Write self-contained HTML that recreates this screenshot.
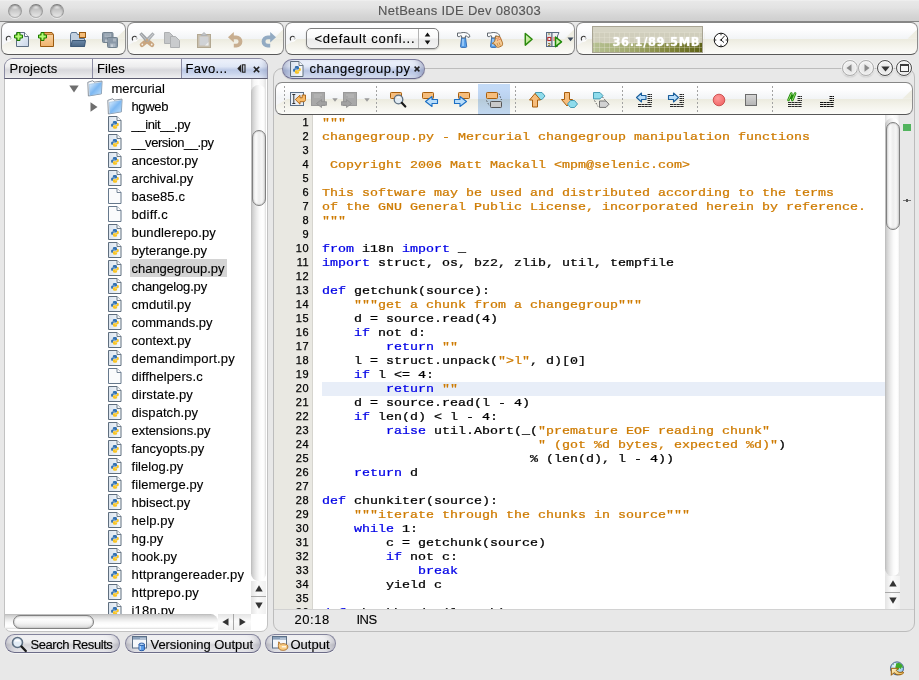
<!DOCTYPE html>
<html><head><meta charset="utf-8"><title>NetBeans IDE Dev 080303</title>
<style>
html,body{margin:0;padding:0}
body{width:919px;height:680px;overflow:hidden;background:#e8e8e8;position:relative;font-family:"Liberation Sans",sans-serif;font-size:13px;color:#000;-webkit-text-stroke:.12px}
.a{position:absolute}
.ic{position:absolute;overflow:visible}
.t{position:absolute;white-space:pre;line-height:16px;height:16px}
#title{left:0;top:0;width:919px;height:21px;background:linear-gradient(#f2f2f2 0,#e8e8e8 6%,#e3e3e3 35%,#d5d5d5 75%,#cfcfcf 100%)}
#tline{left:0;top:21px;width:919px;height:1px;background:#868686}
.tl{position:absolute;top:4px;width:14px;height:14px;border-radius:50%;box-sizing:border-box;border:1px solid #9a9a9a;border-top-color:#7c7c7c;border-bottom-color:#b0b0b0;background:radial-gradient(ellipse 40% 22% at 50% 16%,rgba(255,255,255,.75) 0,rgba(255,255,255,0) 100%),linear-gradient(#b2b2b2 0,#c6c6c6 40%,#dadada 75%,#e6e6e6 100%);box-shadow:0 1px 0 rgba(255,255,255,.55),inset 0 1px 2px rgba(0,0,0,.25)}
.tb{position:absolute;box-sizing:border-box;border:1px solid #8e8e8e;border-top-color:#868686;border-bottom-color:#585858;border-radius:7px;background:linear-gradient(#fff 0,#fdfdfe 22%,#f2f4f6 51%,#ecebdf 52%,#f3f2ea 70%,#fcfcf9 100%);overflow:hidden}
.tb .dg{position:absolute;right:0;top:0;width:22px;height:100%;}
.hd{position:absolute;width:6px;height:6px;border-radius:50%;box-sizing:border-box;border:1.300px solid #333;border-right-color:#f4f4f4;border-bottom-color:#fff;transform:rotate(0deg)}
.sep{position:absolute;width:1px;height:26px;top:86px;background:repeating-linear-gradient(#a2a2a2 0,#a2a2a2 2px,transparent 2px,transparent 4px)}

#side{left:4px;top:58px;width:264px;height:574px;box-sizing:border-box;border:1px solid #c2c2c2;border-radius:9px 9px 7px 7px;background:#fff;overflow:hidden}
#tabs{left:4px;top:58px;width:264px;height:21px;box-sizing:border-box;border:1px solid #8a8aa2;border-bottom:1px solid #5c5c70;border-radius:9px 9px 0 0;overflow:hidden}
.tab{position:absolute;top:0;height:19px;background:linear-gradient(#fafafa 0,#ededee 40%,#d8d8dc 58%,#e2e2e5 78%,#f0f0f1 100%);}
.tab.sel{background:linear-gradient(#eff3fc 0,#dfe7f6 40%,#bcc9e6 58%,#cad5ed 78%,#e3e9f7 100%);box-shadow:inset -7px 0 6px -4px rgba(90,100,140,.3)}
.tsep{position:absolute;top:0;width:1px;height:19px;background:#8a8aa2}
#tabline{left:0;top:19px;width:262px;height:1px;background:#70708a}
.row{position:absolute;left:0;height:18px;line-height:18px;white-space:pre;margin-top:1px}
.vsb{position:absolute;width:15px;background:linear-gradient(90deg,#b8b8b8 0,#cbcbcb 8%,#dadada 20%,#ececec 38%,#fbfbfb 58%,#fff 75%,#fcfcfc 88%,#e6e6e6 95%,#dedede 100%)}
.hsb{position:absolute;height:15px;background:linear-gradient(#b8b8b8 0,#cbcbcb 8%,#dadada 20%,#ececec 38%,#fbfbfb 58%,#fff 75%,#fcfcfc 88%,#e6e6e6 95%,#dedede 100%)}
.vth{position:absolute;box-sizing:border-box;border:1.400px solid #808080;box-shadow:inset 0 0 1.500px rgba(0,0,0,.35);border-radius:7.500px;background:linear-gradient(90deg,#e4e4e4 0,#fbfbfb 25%,#ededed 50%,#f6f6f6 75%,#dcdcdc 100%)}
.hth{position:absolute;box-sizing:border-box;border:1.400px solid #808080;box-shadow:inset 0 0 1.500px rgba(0,0,0,.35);border-radius:7.500px;background:linear-gradient(#e9e9e9 0,#fdfdfd 30%,#f4f4f4 60%,#d9d9d9 100%)}
.sbb{position:absolute;background:linear-gradient(90deg,#e4e4e4 0,#fbfbfb 45%,#f0f0f0 100%);box-sizing:border-box}
#edp{left:273px;top:68px;width:642px;height:564px;box-sizing:border-box;border:1px solid #bcbcbc;border-radius:9px;background:#e8e8e8}
#etab{left:282px;top:58.500px;width:143px;height:20.500px;box-sizing:border-box;border:1px solid #7a7a9a;border-bottom-color:#66668a;border-radius:10.250px;background:linear-gradient(#f0f4fc 0,#e2e9f7 35%,#b8c5e3 60%,#c6d1ea 80%,#dfe6f5 100%);box-shadow:inset 7px 0 6px -4px rgba(90,100,140,.4),inset -7px 0 6px -4px rgba(90,100,140,.4),0 1px 1px rgba(0,0,0,.12)}
#etb{left:275px;top:82px;width:638px;height:33px}
#gut{left:274px;top:115px;width:39px;height:494px;background:#e9e8e2;border-right:1px solid #d6d5cf;box-sizing:border-box}
#code{left:313px;top:115px;width:572px;height:494px;background:#fff;overflow:hidden}
.ln{position:absolute;left:274px;width:35px;text-align:right;font-size:11px;line-height:14px;height:14px;letter-spacing:.45px;margin-top:-1px;-webkit-text-stroke:.25px #000}
.cl{position:absolute;left:9px;-webkit-text-stroke:.3px;transform:scaleY(.82);transform-origin:0 10.550px;height:14px;line-height:14px;white-space:pre;font-family:"Liberation Mono",monospace;font-size:13.330px}
.k{color:#0000e6}.s{color:#ce7b00}
.pill{position:absolute;top:634px;height:19px;box-sizing:border-box;border:1px solid #84849c;border-bottom-color:#6c6c88;border-radius:9.500px;background:linear-gradient(#f6f6f8 0,#ececee 42%,#d4d4d8 58%,#e0e0e4 80%,#ececf0 100%);box-shadow:inset 7px 0 6px -4px rgba(90,90,110,.28),inset -7px 0 6px -4px rgba(90,90,110,.28),0 1px 0 rgba(255,255,255,.5)}
.cb{position:absolute;top:59.800px;width:16px;height:16px;border-radius:50%;box-sizing:border-box;border:1px solid #adadad;background:radial-gradient(circle at 50% 55%,#e4e4e4 0,#ececec 45%,#fdfdfd 85%,#f0f0f0 100%);box-shadow:0 0 0 1px rgba(255,255,255,.55),0 1px 1.500px rgba(0,0,0,.28)}
.cb.dk{border-color:#4e4e4e;border-width:1.200px}
</style></head>
<body>
<div id="title" class="a"></div><div id="tline" class="a"></div>
<div class="tl" style="left:8px"></div>
<div class="tl" style="left:29px"></div>
<div class="tl" style="left:50px"></div>
<div class="t" style="left:0;width:919px;text-align:center;top:3px;color:#555;letter-spacing:.3px">NetBeans IDE Dev 080303</div>
<div class="tb" style="left:1px;top:22px;width:125px;height:33px"><svg class="dg" style="width:22px;height:31px" viewBox="0 0 22 31" preserveAspectRatio="none"><path d="M22 6.500L12.500 15.800H22z" fill="#eeede2"/></svg><svg class="dg" style="left:0;right:auto;width:14px;height:31px" viewBox="0 0 14 31" preserveAspectRatio="none"><path d="M0 15.600H12L0 22.500z" fill="#f5f6f8"/></svg></div>
<div class="tb" style="left:127px;top:22px;width:157px;height:33px"><svg class="dg" style="width:22px;height:31px" viewBox="0 0 22 31" preserveAspectRatio="none"><path d="M22 6.500L12.500 15.800H22z" fill="#eeede2"/></svg><svg class="dg" style="left:0;right:auto;width:14px;height:31px" viewBox="0 0 14 31" preserveAspectRatio="none"><path d="M0 15.600H12L0 22.500z" fill="#f5f6f8"/></svg></div>
<div class="tb" style="left:285px;top:22px;width:290px;height:33px"><svg class="dg" style="width:22px;height:31px" viewBox="0 0 22 31" preserveAspectRatio="none"><path d="M22 6.500L12.500 15.800H22z" fill="#eeede2"/></svg><svg class="dg" style="left:0;right:auto;width:14px;height:31px" viewBox="0 0 14 31" preserveAspectRatio="none"><path d="M0 15.600H12L0 22.500z" fill="#f5f6f8"/></svg></div>
<div class="tb" style="left:576px;top:22px;width:342px;height:33px"><svg class="dg" style="width:22px;height:31px" viewBox="0 0 22 31" preserveAspectRatio="none"><path d="M22 6.500L12.500 15.800H22z" fill="#eeede2"/></svg><svg class="dg" style="left:0;right:auto;width:14px;height:31px" viewBox="0 0 14 31" preserveAspectRatio="none"><path d="M0 15.600H12L0 22.500z" fill="#f5f6f8"/></svg></div>
<svg class="ic" style="left:4.5px;top:35px" width="8" height="8" viewBox="0 0 8 8"><circle cx="4" cy="4" r="2.100" fill="none" stroke="#fff" stroke-width="1.100"/><path d="M2 5.400A2.100 2.100 0 1 1 5.400 2" fill="none" stroke="#3a3a3a" stroke-width="1.100"/><path d="M5.400 2A2.100 2.100 0 0 1 5.700 4.500" fill="none" stroke="#9a9a9a" stroke-width=".9"/></svg>
<svg class="ic" style="left:130.5px;top:35px" width="8" height="8" viewBox="0 0 8 8"><circle cx="4" cy="4" r="2.100" fill="none" stroke="#fff" stroke-width="1.100"/><path d="M2 5.400A2.100 2.100 0 1 1 5.400 2" fill="none" stroke="#3a3a3a" stroke-width="1.100"/><path d="M5.400 2A2.100 2.100 0 0 1 5.700 4.500" fill="none" stroke="#9a9a9a" stroke-width=".9"/></svg>
<svg class="ic" style="left:288.5px;top:35px" width="8" height="8" viewBox="0 0 8 8"><circle cx="4" cy="4" r="2.100" fill="none" stroke="#fff" stroke-width="1.100"/><path d="M2 5.400A2.100 2.100 0 1 1 5.400 2" fill="none" stroke="#3a3a3a" stroke-width="1.100"/><path d="M5.400 2A2.100 2.100 0 0 1 5.700 4.500" fill="none" stroke="#9a9a9a" stroke-width=".9"/></svg>
<svg class="ic" style="left:579.5px;top:35px" width="8" height="8" viewBox="0 0 8 8"><circle cx="4" cy="4" r="2.100" fill="none" stroke="#fff" stroke-width="1.100"/><path d="M2 5.400A2.100 2.100 0 1 1 5.400 2" fill="none" stroke="#3a3a3a" stroke-width="1.100"/><path d="M5.400 2A2.100 2.100 0 0 1 5.700 4.500" fill="none" stroke="#9a9a9a" stroke-width=".9"/></svg>
<svg class="ic" style="left:13.5px;top:31.5px" width="16" height="16" viewBox="0 0 16 16" ><defs><linearGradient id="gdocnewfile13_31" x1="0" y1="0" x2="1" y2="1"><stop offset="0" stop-color="#f6f9fd"/><stop offset="1" stop-color="#c8d5e8"/></linearGradient></defs>
<path d="M2.500 0.500h8l4 4v10h-12z" fill="url(#gdocnewfile13_31)" stroke="#5f6f82"/><path d="M10.500 0.500v4h4" fill="#fff" stroke="#5f6f82"/><path d="M3 0.5h3v2.5h2.5v3H6v2.5H3V6H0.5V3H3z" fill="#7fdc3a" stroke="#1c7a00" stroke-width="1"/><path d="M3.8 1.5h1.4v2.3h2.3v1.4H5.2v2.3H3.8V5.2H1.5V3.8h2.3z" fill="#b6f57a"/></svg>
<svg class="ic" style="left:37.5px;top:31.5px" width="16" height="16" viewBox="0 0 16 16" ><defs><linearGradient id="gboxnewproj37_31" x1="0" y1="0" x2="0" y2="1"><stop offset="0" stop-color="#f9d2a0"/><stop offset="1" stop-color="#f0b36e"/></linearGradient></defs>
<path d="M2.500 2.500h13v12h-13z" fill="url(#gboxnewproj37_31)" stroke="#9a5a10"/><path d="M2.500 2.500l1.500-2h10l1.500 2" fill="#e9a860" stroke="#9a5a10"/><path d="M3 0.5h3v2.5h2.5v3H6v2.5H3V6H0.5V3H3z" fill="#7fdc3a" stroke="#1c7a00" stroke-width="1"/><path d="M3.8 1.5h1.4v2.3h2.3v1.4H5.2v2.3H3.8V5.2H1.5V3.8h2.3z" fill="#b6f57a"/></svg>
<svg class="ic" style="left:70px;top:31.5px" width="16" height="16" viewBox="0 0 16 16" ><defs><linearGradient id="gopopenproj70_31" x1="0" y1="0" x2="0" y2="1"><stop offset="0" stop-color="#6a88a8"/><stop offset="1" stop-color="#4a6684"/></linearGradient></defs><path d="M0.500 14.500v-12l1-2h5l1 2h2v4h5v8z" fill="#c2d0e0" stroke="#5a7390"/><path d="M0.800 14.500l1.500-6h13.200l-1 6z" fill="url(#gopopenproj70_31)" stroke="#3e5a78"/><rect x="9.500" y="0.500" width="6" height="5" fill="#f4bc78" stroke="#9a5a10"/></svg>
<svg class="ic" style="left:102px;top:31.5px" width="16" height="16" viewBox="0 0 16 16" ><rect x="0.500" y="0.500" width="10.500" height="10" rx="1" fill="#8b99a8" stroke="#73828f"/><rect x="2.500" y="1.500" width="6.500" height="3.500" fill="#aab5c0"/><path d="M3.500 3h4.500" stroke="#8b99a8" stroke-width=".8"/><rect x="5.500" y="5.500" width="10" height="10" rx="1" fill="#8b99a8" stroke="#73828f"/><rect x="11" y="6.500" width="3" height="3" fill="#aab5c0"/><rect x="3" y="7.500" width="2.500" height="2.500" fill="#b9c2cb"/><rect x="8" y="11.500" width="5.500" height="3.500" fill="#aab5c0"/><rect x="9" y="12.500" width="2" height="2.500" fill="#c8d0d8"/></svg>
<svg class="ic" style="left:138.5px;top:31.5px" width="16" height="16" viewBox="0 0 16 16" ><path d="M8 8.800L3 12.800M8 8.800L13 12.800" stroke="#c9a57e" stroke-width="4.600" stroke-linecap="round"/><path d="M0.300 2.200L2.600 0.200 10 7.800 7 10.200z" fill="#9da1a5"/><path d="M15.700 2.200L13.400 0.200 6 7.800 9 10.200z" fill="#a9adb1"/><path d="M1.800 1.800l5.500 6M14.200 1.800l-5.500 6" stroke="#d4d7da" stroke-width=".8"/><path d="M6.300 8L8 6.500 9.700 8 8 10z" fill="#c9a57e"/><circle cx="3.300" cy="12.500" r=".9" fill="#f4efe8"/><circle cx="12.700" cy="12.500" r=".9" fill="#f4efe8"/></svg>
<svg class="ic" style="left:164px;top:31.5px" width="16" height="16" viewBox="0 0 16 16" ><path d="M0.5 0.5h5l4 4v7h-9z" fill="#c4c6c8" stroke="#aeb0b2"/><path d="M6.5 4.5h5l4 4v7h-9z" fill="#c9cbcd" stroke="#aeb0b2"/></svg>
<svg class="ic" style="left:196px;top:31.5px" width="16" height="16" viewBox="0 0 16 16" ><rect x="1.5" y="2.5" width="13" height="13" fill="#c8bfae" stroke="#b3a892"/><rect x="3.5" y="4.5" width="9" height="9" fill="#d0d2d5"/><path d="M5 3.5l3-3 3 3z" fill="#c2c4c7" stroke="#b0b2b5"/><path d="M12.5 10v3.5H9z" fill="#eceded"/></svg>
<svg class="ic" style="left:227.5px;top:32px" width="16" height="16" viewBox="0 0 16 16" ><path d="M4 5.300h4.300a4.200 4.200 0 0 1 0 8.400H5.800" fill="none" stroke="#c8ae90" stroke-width="3.800"/><path d="M0 5.300l5.800-5.300v10.600z" fill="#c8ae90"/></svg>
<svg class="ic" style="left:260px;top:32px" width="16" height="16" viewBox="0 0 16 16" ><path d="M12 5.300H7.700a4.200 4.200 0 0 0 0 8.400h2.500" fill="none" stroke="#92aac2" stroke-width="3.800"/><path d="M16 5.300l-5.800-5.300v10.600z" fill="#92aac2"/></svg>
<div class="a" style="left:306px;top:28px;width:133px;height:21px;box-sizing:border-box;border:1px solid #7e7e7e;border-radius:5px;background:linear-gradient(#fff 0,#fafafa 46%,#ebebeb 54%,#f3f3f3 100%);box-shadow:0 1px 1.500px rgba(0,0,0,.22)"></div>
<div class="a" style="left:418px;top:29px;width:1px;height:19px;background:#b4b4b4"></div>
<div class="t" style="left:314.500px;top:30.500px;letter-spacing:.72px">&lt;default confi...</div>
<svg class="ic" style="left:423px;top:31px" width="9" height="15" viewBox="0 0 9 15"><path d="M4.500 1.500L7.300 5.500H1.700zM4.500 13.500L7.300 9.500H1.700z" fill="#111"/></svg>
<svg class="ic" style="left:455.5px;top:31.5px" width="16" height="16" viewBox="0 0 16 16" ><path d="M5.700 5.500h3.800l1.200 9c0 .600-.400.900-1 .900H5.500c-.600 0-1-.300-1-.900z" fill="#5aa2ea" stroke="#2a64ae" stroke-width=".9"/><path d="M7 7v7" stroke="#b4d8fa" stroke-width="1.300"/><path d="M1.500 1h3c1.500-.600 5-.800 7 .300 1.500.800 2.300 2 2.300 3.500l-1.800.600c-.500-1-1.300-1.500-2.500-1.500l-.300 2H5.800l-.300-2c-.800-.300-1.800 0-2.300 1l-1.700-.700z" fill="#fbfcfd" stroke="#505860" stroke-width=".9" stroke-linejoin="round"/></svg>
<svg class="ic" style="left:487px;top:31.5px" width="16" height="16" viewBox="0 0 16 16" ><g transform="translate(-1,0)"><path d="M5.700 5.500h3.800l1.200 9c0 .600-.400.900-1 .900H5.500c-.600 0-1-.300-1-.900z" fill="#5aa2ea" stroke="#2a64ae" stroke-width=".9"/><path d="M7 7v7" stroke="#b4d8fa" stroke-width="1.300"/><path d="M1.500 1h3c1.500-.600 5-.800 7 .300 1.500.800 2.300 2 2.300 3.500l-1.800.600c-.500-1-1.300-1.500-2.500-1.500l-.300 2H5.800l-.300-2c-.800-.300-1.800 0-2.300 1l-1.700-.700z" fill="#fbfcfd" stroke="#505860" stroke-width=".9" stroke-linejoin="round"/></g><path d="M8.500 4.800c1.500-1 3.500-.800 4.800.500l2.200 5.500c.300 1.500 0 2.500-.800 3.200l-3.200 1.300c-1.200.200-2-.300-2.500-1l-1-1.800-2.800-1.200c2-.800 3-2.300 3.300-6.500z" fill="#f4c890" stroke="#a8661c" stroke-width=".9" stroke-linejoin="round"/><path d="M9.500 6.500l3.500-1M10 8.300l3.800-1.200" stroke="#d8503a" stroke-width=".9" stroke-dasharray="1 .7"/><path d="M10 11l1.200 3M12 10.300l1.300 3.200" stroke="#c8843a" stroke-width=".8"/></svg>
<svg class="ic" style="left:520.5px;top:32px" width="16" height="16" viewBox="0 0 16 16" ><defs><linearGradient id="grunrun520_32" x1="0" y1="0" x2="1" y2="1"><stop offset="0" stop-color="#e6f7d2"/><stop offset="1" stop-color="#9fe060"/></linearGradient></defs><path d="M4.300 1.500l6.800 5.800-6.800 5.800z" fill="url(#grunrun520_32)" stroke="#2c8a0e" stroke-width="1.500" stroke-linejoin="round"/></svg>
<svg class="ic" style="left:546px;top:32px" width="16" height="16" viewBox="0 0 16 16" ><rect x="0.500" y="0.500" width="5.500" height="14" fill="#dfe3e8" stroke="#5a6b80"/><path d="M6 0.500h7l-1.500 3.500v10.500H6z" fill="#eef0f3" stroke="#5a6b80"/><rect x="1.800" y="5.500" width="3" height="3" fill="#fff" stroke="#b82a2a" stroke-width="1.100"/><rect x="7" y="5" width="3" height="4" fill="#f7a0a0"/><path d="M2 2h2M2 11.500h2v2H2" stroke="#8a7a2a" fill="none" stroke-width=".9"/><path d="M9.500 5l6 4.800-6 4.800z" fill="#c9efa8" stroke="#1f8a0a" stroke-width="1.500" stroke-linejoin="round"/></svg>
<svg class="ic" style="left:567px;top:37px" width="7" height="5" viewBox="0 0 7 5"><path d="M0.500 0.500h6L3.500 4.200z" fill="#3c4a5c"/></svg>
<svg class="ic" style="left:592px;top:26px" width="111" height="27" viewBox="0 0 111 27"><defs><linearGradient id="gm" x1="0" y1="0" x2="1" y2="0"><stop offset="0" stop-color="#b7c294"/><stop offset=".35" stop-color="#a0a86c"/><stop offset=".7" stop-color="#7f8438"/><stop offset="1" stop-color="#5c6014"/></linearGradient></defs><rect x="0" y="0" width="111" height="27" fill="#d0cebc"/><rect x="0" y="0" width="111" height="6.500" fill="#d6d4c4"/><path d="M0 16.500 L9 16.300 L10 17.300 L40 17.300 L70 17 L111 16.800 V27 H0z" fill="url(#gm)"/><path d="M2.5 6.500V27M7.5 6.500V27M12.5 6.500V27M17.5 6.500V27M22.5 6.500V27M27.5 6.500V27M32.5 6.500V27M37.5 6.500V27M42.5 6.500V27M47.5 6.500V27M52.5 6.500V27M57.5 6.500V27M62.5 6.500V27M67.5 6.500V27M72.5 6.500V27M77.5 6.500V27M82.5 6.500V27M87.5 6.500V27M92.5 6.500V27M97.5 6.500V27M102.5 6.500V27M107.5 6.500V27M112.5 6.500V27M0 6.5H111M0 11.5H111M0 16.5H111M0 21.5H111" stroke="#e8e7da" stroke-opacity=".32" stroke-width="1"/><rect x="0.500" y="0.500" width="110" height="26" fill="none" stroke="#a9a594"/><text x="20.500" y="19.600" font-family="DejaVu Sans, sans-serif" font-weight="bold" font-size="11.500px" fill="#fff" letter-spacing=".58" style="text-shadow:0 0 1.500px rgba(255,255,255,.8)">36.1/89.5MB</text></svg>
<svg class="ic" style="left:712.5px;top:31.5px" width="16" height="16" viewBox="0 0 16 16" ><circle cx="8" cy="8" r="6.800" fill="#fff" stroke="#111" stroke-width="1"/><path d="M8 1.500v1.800M8 12.700v1.800M1.500 8h1.800M12.700 8h1.800" stroke="#111" stroke-width=".9"/><path d="M8 8l3.600-4.200M8 8l3 2.600" stroke="#111" stroke-width=".9"/><path d="M6.500 8L9 6.800v2.400z" fill="#111"/></svg>
<div id="side" class="a"></div><div id="tabs" class="a">
<div class="tab" style="left:0;width:87px"></div><div class="tsep" style="left:87px"></div>
<div class="tab" style="left:88px;width:88px"></div><div class="tsep" style="left:176px"></div>
<div class="tab sel" style="left:177px;width:86px"></div>
</div>
<div class="t" style="left:9.500px;top:60.500px;letter-spacing:.1px">Projects</div>
<div class="t" style="left:97px;top:60.500px;letter-spacing:.1px">Files</div>
<div class="t" style="left:185.500px;top:60.500px;letter-spacing:.3px">Favo...</div>
<svg class="ic" style="left:236.500px;top:64px" width="9" height="9" viewBox="0 0 9 9"><path d="M4.300 0.300v8.400L0.300 4.500z" fill="#222"/><rect x="5.600" y="0.800" width="2.400" height="7.400" fill="none" stroke="#222" stroke-width="1.100"/></svg>
<svg class="ic" style="left:252.500px;top:65.500px" width="7" height="7" viewBox="0 0 7 7"><path d="M0.800 0.800l5.400 5.400M6.200 0.800L0.800 6.200" stroke="#222" stroke-width="1.600"/></svg>
<div class="a" style="left:5px;top:79px;width:246px;height:535px;overflow:hidden">
<svg class="ic" style="left:64px;top:6px" width="10" height="8" viewBox="0 0 10 8"><path d="M0.300 0.500h9.400L5 7.500z" fill="#6e6e6e"/></svg>
<svg class="ic" style="left:81.5px;top:1px" width="16" height="16" viewBox="0 0 16 16" ><defs><linearGradient id="gfofolder81_1" x1="0" y1="0" x2="1" y2="1"><stop offset="0" stop-color="#e4f2fe"/><stop offset=".5" stop-color="#7db8f2"/><stop offset="1" stop-color="#bfe0fc"/></linearGradient></defs><path d="M0.800 2.300l5-1.600 1.200 1.400 8-1-.600 12.700-13 2.200z" fill="#f8fafc" stroke="#7e8894" stroke-width=".9"/><path d="M2.300 4.300l12.400-2-.600 11.300-11.300 2z" fill="url(#gfofolder81_1)" stroke="#8fb4d8" stroke-width=".5"/></svg>
<div class="row" style="left:106.500px;top:0px;letter-spacing:-0.02px">mercurial</div>
<svg class="ic" style="left:85px;top:22.5px" width="8" height="10" viewBox="0 0 8 10"><path d="M0.500 0.300v9.400L7.500 5z" fill="#6e6e6e"/></svg>
<svg class="ic" style="left:101.5px;top:19px" width="16" height="16" viewBox="0 0 16 16" ><defs><linearGradient id="gfofolder101_19" x1="0" y1="0" x2="1" y2="1"><stop offset="0" stop-color="#e4f2fe"/><stop offset=".5" stop-color="#7db8f2"/><stop offset="1" stop-color="#bfe0fc"/></linearGradient></defs><path d="M0.800 2.300l5-1.600 1.200 1.400 8-1-.600 12.700-13 2.200z" fill="#f8fafc" stroke="#7e8894" stroke-width=".9"/><path d="M2.300 4.300l12.400-2-.600 11.300-11.300 2z" fill="url(#gfofolder101_19)" stroke="#8fb4d8" stroke-width=".5"/></svg>
<div class="row" style="left:126.500px;top:18px;letter-spacing:-0.36px">hgweb</div>
<svg class="ic" style="left:102.5px;top:37px" width="14" height="16" viewBox="0 0 14 16" ><defs><linearGradient id="gpypy102_37" x1="0" y1="0" x2="1" y2="0"><stop offset="0" stop-color="#d9e3ee"/><stop offset="1" stop-color="#f8fafc"/></linearGradient></defs><path d="M0.500 0.500h8.500l4 4v11H0.500z" fill="url(#gpypy102_37)" stroke="#5f6e7e"/><path d="M9 0.500v4h4" fill="#f4f7fa" stroke="#5f6e7e" stroke-width=".9"/><g transform="translate(1.500,2) scale(.78)"><path d="M6.600 3.800c-2 0-2.300.8-2.300 1.600v1.200h2.600v.5H3.600c-1.100 0-1.600 1-1.600 2.200s.5 2 1.500 2h.9v-1.300c0-1 .8-1.700 1.700-1.700h2.200c.8 0 1.300-.6 1.300-1.300V5.400c0-.9-.9-1.600-3-1.600z" fill="#3572b0"/><path d="M7.400 13.800c2 0 2.300-.8 2.300-1.600V11H7.100v-.5h3.300c1.100 0 1.600-1 1.600-2.200s-.5-2-1.500-2h-.9v1.300c0 1-.8 1.700-1.700 1.700H5.700c-.8 0-1.300.6-1.300 1.300v1.600c0 .9.900 1.600 3 1.600z" fill="#f9c526"/></g></svg>
<div class="row" style="left:126.500px;top:36px;letter-spacing:-0.38px">__init__.py</div>
<svg class="ic" style="left:102.5px;top:55px" width="14" height="16" viewBox="0 0 14 16" ><defs><linearGradient id="gpypy102_55" x1="0" y1="0" x2="1" y2="0"><stop offset="0" stop-color="#d9e3ee"/><stop offset="1" stop-color="#f8fafc"/></linearGradient></defs><path d="M0.500 0.500h8.500l4 4v11H0.500z" fill="url(#gpypy102_55)" stroke="#5f6e7e"/><path d="M9 0.500v4h4" fill="#f4f7fa" stroke="#5f6e7e" stroke-width=".9"/><g transform="translate(1.500,2) scale(.78)"><path d="M6.600 3.800c-2 0-2.300.8-2.300 1.600v1.200h2.600v.5H3.600c-1.100 0-1.600 1-1.600 2.200s.5 2 1.500 2h.9v-1.300c0-1 .8-1.700 1.700-1.700h2.200c.8 0 1.300-.6 1.300-1.300V5.400c0-.9-.9-1.600-3-1.600z" fill="#3572b0"/><path d="M7.400 13.800c2 0 2.300-.8 2.300-1.600V11H7.100v-.5h3.300c1.100 0 1.600-1 1.600-2.200s-.5-2-1.500-2h-.9v1.300c0 1-.8 1.700-1.700 1.700H5.700c-.8 0-1.300.6-1.300 1.300v1.600c0 .9.900 1.600 3 1.600z" fill="#f9c526"/></g></svg>
<div class="row" style="left:126.500px;top:54px;letter-spacing:-0.43px">__version__.py</div>
<svg class="ic" style="left:102.5px;top:73px" width="14" height="16" viewBox="0 0 14 16" ><defs><linearGradient id="gpypy102_73" x1="0" y1="0" x2="1" y2="0"><stop offset="0" stop-color="#d9e3ee"/><stop offset="1" stop-color="#f8fafc"/></linearGradient></defs><path d="M0.500 0.500h8.500l4 4v11H0.500z" fill="url(#gpypy102_73)" stroke="#5f6e7e"/><path d="M9 0.500v4h4" fill="#f4f7fa" stroke="#5f6e7e" stroke-width=".9"/><g transform="translate(1.500,2) scale(.78)"><path d="M6.600 3.800c-2 0-2.300.8-2.300 1.600v1.200h2.600v.5H3.600c-1.100 0-1.600 1-1.600 2.200s.5 2 1.500 2h.9v-1.300c0-1 .8-1.700 1.700-1.700h2.200c.8 0 1.300-.6 1.300-1.300V5.400c0-.9-.9-1.600-3-1.600z" fill="#3572b0"/><path d="M7.400 13.800c2 0 2.300-.8 2.300-1.600V11H7.100v-.5h3.300c1.100 0 1.600-1 1.600-2.200s-.5-2-1.500-2h-.9v1.300c0 1-.8 1.700-1.700 1.700H5.700c-.8 0-1.300.6-1.300 1.300v1.600c0 .9.900 1.600 3 1.600z" fill="#f9c526"/></g></svg>
<div class="row" style="left:126.500px;top:72px;letter-spacing:0.01px">ancestor.py</div>
<svg class="ic" style="left:102.5px;top:91px" width="14" height="16" viewBox="0 0 14 16" ><defs><linearGradient id="gpypy102_91" x1="0" y1="0" x2="1" y2="0"><stop offset="0" stop-color="#d9e3ee"/><stop offset="1" stop-color="#f8fafc"/></linearGradient></defs><path d="M0.500 0.500h8.500l4 4v11H0.500z" fill="url(#gpypy102_91)" stroke="#5f6e7e"/><path d="M9 0.500v4h4" fill="#f4f7fa" stroke="#5f6e7e" stroke-width=".9"/><g transform="translate(1.500,2) scale(.78)"><path d="M6.600 3.800c-2 0-2.300.8-2.300 1.600v1.200h2.600v.5H3.600c-1.100 0-1.600 1-1.600 2.200s.5 2 1.500 2h.9v-1.300c0-1 .8-1.700 1.700-1.700h2.200c.8 0 1.300-.6 1.300-1.300V5.400c0-.9-.9-1.600-3-1.600z" fill="#3572b0"/><path d="M7.400 13.800c2 0 2.300-.8 2.300-1.600V11H7.100v-.5h3.300c1.100 0 1.600-1 1.600-2.200s-.5-2-1.500-2h-.9v1.300c0 1-.8 1.700-1.700 1.700H5.700c-.8 0-1.300.6-1.300 1.300v1.600c0 .9.900 1.600 3 1.600z" fill="#f9c526"/></g></svg>
<div class="row" style="left:126.500px;top:90px;letter-spacing:-0.04px">archival.py</div>
<svg class="ic" style="left:102.5px;top:109px" width="14" height="16" viewBox="0 0 14 16" ><path d="M0.500 0.500h8.500l4 4v11H0.500z" fill="#fafbfc" stroke="#66788c"/><path d="M9 0.500v4h4" fill="#fff" stroke="#66788c" stroke-width=".9"/></svg>
<div class="row" style="left:126.500px;top:108px;letter-spacing:0.09px">base85.c</div>
<svg class="ic" style="left:102.5px;top:127px" width="14" height="16" viewBox="0 0 14 16" ><path d="M0.500 0.500h8.500l4 4v11H0.500z" fill="#fafbfc" stroke="#66788c"/><path d="M9 0.500v4h4" fill="#fff" stroke="#66788c" stroke-width=".9"/></svg>
<div class="row" style="left:126.500px;top:126px;letter-spacing:0.29px">bdiff.c</div>
<svg class="ic" style="left:102.5px;top:145px" width="14" height="16" viewBox="0 0 14 16" ><defs><linearGradient id="gpypy102_145" x1="0" y1="0" x2="1" y2="0"><stop offset="0" stop-color="#d9e3ee"/><stop offset="1" stop-color="#f8fafc"/></linearGradient></defs><path d="M0.500 0.500h8.500l4 4v11H0.500z" fill="url(#gpypy102_145)" stroke="#5f6e7e"/><path d="M9 0.500v4h4" fill="#f4f7fa" stroke="#5f6e7e" stroke-width=".9"/><g transform="translate(1.500,2) scale(.78)"><path d="M6.600 3.800c-2 0-2.300.8-2.300 1.600v1.200h2.600v.5H3.600c-1.100 0-1.600 1-1.600 2.200s.5 2 1.500 2h.9v-1.300c0-1 .8-1.700 1.700-1.700h2.200c.8 0 1.300-.6 1.300-1.300V5.400c0-.9-.9-1.600-3-1.600z" fill="#3572b0"/><path d="M7.400 13.800c2 0 2.300-.8 2.300-1.600V11H7.100v-.5h3.300c1.100 0 1.600-1 1.600-2.200s-.5-2-1.500-2h-.9v1.300c0 1-.8 1.700-1.700 1.700H5.700c-.8 0-1.300.6-1.300 1.300v1.600c0 .9.900 1.600 3 1.600z" fill="#f9c526"/></g></svg>
<div class="row" style="left:126.500px;top:144px;letter-spacing:0.16px">bundlerepo.py</div>
<svg class="ic" style="left:102.5px;top:163px" width="14" height="16" viewBox="0 0 14 16" ><defs><linearGradient id="gpypy102_163" x1="0" y1="0" x2="1" y2="0"><stop offset="0" stop-color="#d9e3ee"/><stop offset="1" stop-color="#f8fafc"/></linearGradient></defs><path d="M0.500 0.500h8.500l4 4v11H0.500z" fill="url(#gpypy102_163)" stroke="#5f6e7e"/><path d="M9 0.500v4h4" fill="#f4f7fa" stroke="#5f6e7e" stroke-width=".9"/><g transform="translate(1.500,2) scale(.78)"><path d="M6.600 3.800c-2 0-2.300.8-2.300 1.600v1.200h2.600v.5H3.600c-1.100 0-1.600 1-1.600 2.200s.5 2 1.500 2h.9v-1.300c0-1 .8-1.700 1.700-1.700h2.200c.8 0 1.300-.6 1.300-1.300V5.400c0-.9-.9-1.600-3-1.600z" fill="#3572b0"/><path d="M7.400 13.800c2 0 2.300-.8 2.300-1.600V11H7.100v-.5h3.300c1.100 0 1.600-1 1.600-2.200s-.5-2-1.500-2h-.9v1.300c0 1-.8 1.700-1.700 1.700H5.700c-.8 0-1.300.6-1.300 1.300v1.600c0 .9.900 1.600 3 1.600z" fill="#f9c526"/></g></svg>
<div class="row" style="left:126.500px;top:162px;letter-spacing:0.04px">byterange.py</div>
<svg class="ic" style="left:102.5px;top:181px" width="14" height="16" viewBox="0 0 14 16" ><defs><linearGradient id="gpypy102_181" x1="0" y1="0" x2="1" y2="0"><stop offset="0" stop-color="#d9e3ee"/><stop offset="1" stop-color="#f8fafc"/></linearGradient></defs><path d="M0.500 0.500h8.500l4 4v11H0.500z" fill="url(#gpypy102_181)" stroke="#5f6e7e"/><path d="M9 0.500v4h4" fill="#f4f7fa" stroke="#5f6e7e" stroke-width=".9"/><g transform="translate(1.500,2) scale(.78)"><path d="M6.600 3.800c-2 0-2.300.8-2.300 1.600v1.200h2.600v.5H3.600c-1.100 0-1.600 1-1.600 2.200s.5 2 1.500 2h.9v-1.300c0-1 .8-1.700 1.700-1.700h2.200c.8 0 1.300-.6 1.300-1.300V5.400c0-.9-.9-1.600-3-1.600z" fill="#3572b0"/><path d="M7.400 13.800c2 0 2.300-.8 2.300-1.600V11H7.100v-.5h3.300c1.100 0 1.600-1 1.600-2.200s-.5-2-1.500-2h-.9v1.300c0 1-.8 1.700-1.700 1.700H5.700c-.8 0-1.300.6-1.300 1.300v1.600c0 .9.900 1.600 3 1.600z" fill="#f9c526"/></g></svg>
<div class="a" style="left:125px;top:180px;width:97px;height:18px;background:#d4d4d4"></div>
<div class="row" style="left:126.500px;top:180px;letter-spacing:-0.02px">changegroup.py</div>
<svg class="ic" style="left:102.5px;top:199px" width="14" height="16" viewBox="0 0 14 16" ><defs><linearGradient id="gpypy102_199" x1="0" y1="0" x2="1" y2="0"><stop offset="0" stop-color="#d9e3ee"/><stop offset="1" stop-color="#f8fafc"/></linearGradient></defs><path d="M0.500 0.500h8.500l4 4v11H0.500z" fill="url(#gpypy102_199)" stroke="#5f6e7e"/><path d="M9 0.500v4h4" fill="#f4f7fa" stroke="#5f6e7e" stroke-width=".9"/><g transform="translate(1.500,2) scale(.78)"><path d="M6.600 3.800c-2 0-2.300.8-2.300 1.600v1.200h2.600v.5H3.600c-1.100 0-1.600 1-1.600 2.200s.5 2 1.500 2h.9v-1.300c0-1 .8-1.700 1.700-1.700h2.200c.8 0 1.300-.6 1.300-1.300V5.400c0-.9-.9-1.600-3-1.600z" fill="#3572b0"/><path d="M7.400 13.800c2 0 2.300-.8 2.300-1.600V11H7.100v-.5h3.300c1.100 0 1.600-1 1.600-2.200s-.5-2-1.500-2h-.9v1.300c0 1-.8 1.700-1.700 1.700H5.700c-.8 0-1.300.6-1.300 1.300v1.600c0 .9.900 1.600 3 1.600z" fill="#f9c526"/></g></svg>
<div class="row" style="left:126.500px;top:198px;letter-spacing:-0.15px">changelog.py</div>
<svg class="ic" style="left:102.5px;top:217px" width="14" height="16" viewBox="0 0 14 16" ><defs><linearGradient id="gpypy102_217" x1="0" y1="0" x2="1" y2="0"><stop offset="0" stop-color="#d9e3ee"/><stop offset="1" stop-color="#f8fafc"/></linearGradient></defs><path d="M0.500 0.500h8.500l4 4v11H0.500z" fill="url(#gpypy102_217)" stroke="#5f6e7e"/><path d="M9 0.500v4h4" fill="#f4f7fa" stroke="#5f6e7e" stroke-width=".9"/><g transform="translate(1.500,2) scale(.78)"><path d="M6.600 3.800c-2 0-2.300.8-2.300 1.600v1.200h2.600v.5H3.600c-1.100 0-1.600 1-1.600 2.200s.5 2 1.500 2h.9v-1.300c0-1 .8-1.700 1.700-1.700h2.200c.8 0 1.300-.6 1.300-1.300V5.400c0-.9-.9-1.600-3-1.600z" fill="#3572b0"/><path d="M7.400 13.800c2 0 2.300-.8 2.300-1.600V11H7.100v-.5h3.300c1.100 0 1.600-1 1.600-2.200s-.5-2-1.500-2h-.9v1.300c0 1-.8 1.700-1.700 1.700H5.700c-.8 0-1.300.6-1.300 1.300v1.600c0 .9.900 1.600 3 1.600z" fill="#f9c526"/></g></svg>
<div class="row" style="left:126.500px;top:216px;letter-spacing:0.1px">cmdutil.py</div>
<svg class="ic" style="left:102.5px;top:235px" width="14" height="16" viewBox="0 0 14 16" ><defs><linearGradient id="gpypy102_235" x1="0" y1="0" x2="1" y2="0"><stop offset="0" stop-color="#d9e3ee"/><stop offset="1" stop-color="#f8fafc"/></linearGradient></defs><path d="M0.500 0.500h8.500l4 4v11H0.500z" fill="url(#gpypy102_235)" stroke="#5f6e7e"/><path d="M9 0.500v4h4" fill="#f4f7fa" stroke="#5f6e7e" stroke-width=".9"/><g transform="translate(1.500,2) scale(.78)"><path d="M6.600 3.800c-2 0-2.300.8-2.300 1.600v1.200h2.600v.5H3.600c-1.100 0-1.600 1-1.600 2.200s.5 2 1.500 2h.9v-1.300c0-1 .8-1.700 1.700-1.700h2.200c.8 0 1.300-.6 1.300-1.300V5.400c0-.9-.9-1.600-3-1.600z" fill="#3572b0"/><path d="M7.400 13.800c2 0 2.300-.8 2.300-1.600V11H7.100v-.5h3.300c1.100 0 1.600-1 1.600-2.200s-.5-2-1.500-2h-.9v1.300c0 1-.8 1.700-1.700 1.700H5.700c-.8 0-1.300.6-1.300 1.300v1.600c0 .9.900 1.600 3 1.600z" fill="#f9c526"/></g></svg>
<div class="row" style="left:126.500px;top:234px;letter-spacing:0.02px">commands.py</div>
<svg class="ic" style="left:102.5px;top:253px" width="14" height="16" viewBox="0 0 14 16" ><defs><linearGradient id="gpypy102_253" x1="0" y1="0" x2="1" y2="0"><stop offset="0" stop-color="#d9e3ee"/><stop offset="1" stop-color="#f8fafc"/></linearGradient></defs><path d="M0.500 0.500h8.500l4 4v11H0.500z" fill="url(#gpypy102_253)" stroke="#5f6e7e"/><path d="M9 0.500v4h4" fill="#f4f7fa" stroke="#5f6e7e" stroke-width=".9"/><g transform="translate(1.500,2) scale(.78)"><path d="M6.600 3.800c-2 0-2.300.8-2.300 1.600v1.200h2.600v.5H3.600c-1.100 0-1.600 1-1.600 2.200s.5 2 1.500 2h.9v-1.300c0-1 .8-1.700 1.700-1.700h2.200c.8 0 1.300-.6 1.300-1.300V5.400c0-.9-.9-1.600-3-1.600z" fill="#3572b0"/><path d="M7.400 13.800c2 0 2.300-.8 2.300-1.600V11H7.100v-.5h3.300c1.100 0 1.600-1 1.600-2.200s-.5-2-1.500-2h-.9v1.300c0 1-.8 1.700-1.700 1.700H5.700c-.8 0-1.300.6-1.300 1.300v1.600c0 .9.900 1.600 3 1.600z" fill="#f9c526"/></g></svg>
<div class="row" style="left:126.500px;top:252px;letter-spacing:0.02px">context.py</div>
<svg class="ic" style="left:102.5px;top:271px" width="14" height="16" viewBox="0 0 14 16" ><defs><linearGradient id="gpypy102_271" x1="0" y1="0" x2="1" y2="0"><stop offset="0" stop-color="#d9e3ee"/><stop offset="1" stop-color="#f8fafc"/></linearGradient></defs><path d="M0.500 0.500h8.500l4 4v11H0.500z" fill="url(#gpypy102_271)" stroke="#5f6e7e"/><path d="M9 0.500v4h4" fill="#f4f7fa" stroke="#5f6e7e" stroke-width=".9"/><g transform="translate(1.500,2) scale(.78)"><path d="M6.600 3.800c-2 0-2.300.8-2.300 1.600v1.200h2.600v.5H3.600c-1.100 0-1.600 1-1.600 2.200s.5 2 1.500 2h.9v-1.300c0-1 .8-1.700 1.700-1.700h2.200c.8 0 1.300-.6 1.300-1.300V5.400c0-.9-.9-1.600-3-1.600z" fill="#3572b0"/><path d="M7.400 13.800c2 0 2.300-.8 2.300-1.600V11H7.100v-.5h3.300c1.100 0 1.600-1 1.600-2.200s-.5-2-1.500-2h-.9v1.300c0 1-.8 1.700-1.700 1.700H5.700c-.8 0-1.300.6-1.300 1.300v1.600c0 .9.900 1.600 3 1.600z" fill="#f9c526"/></g></svg>
<div class="row" style="left:126.500px;top:270px;letter-spacing:0.2px">demandimport.py</div>
<svg class="ic" style="left:102.5px;top:289px" width="14" height="16" viewBox="0 0 14 16" ><path d="M0.500 0.500h8.500l4 4v11H0.500z" fill="#fafbfc" stroke="#66788c"/><path d="M9 0.500v4h4" fill="#fff" stroke="#66788c" stroke-width=".9"/></svg>
<div class="row" style="left:126.500px;top:288px;letter-spacing:0.11px">diffhelpers.c</div>
<svg class="ic" style="left:102.5px;top:307px" width="14" height="16" viewBox="0 0 14 16" ><defs><linearGradient id="gpypy102_307" x1="0" y1="0" x2="1" y2="0"><stop offset="0" stop-color="#d9e3ee"/><stop offset="1" stop-color="#f8fafc"/></linearGradient></defs><path d="M0.500 0.500h8.500l4 4v11H0.500z" fill="url(#gpypy102_307)" stroke="#5f6e7e"/><path d="M9 0.500v4h4" fill="#f4f7fa" stroke="#5f6e7e" stroke-width=".9"/><g transform="translate(1.500,2) scale(.78)"><path d="M6.600 3.800c-2 0-2.300.8-2.300 1.600v1.200h2.600v.5H3.600c-1.100 0-1.600 1-1.600 2.200s.5 2 1.500 2h.9v-1.300c0-1 .8-1.700 1.700-1.700h2.200c.8 0 1.300-.6 1.300-1.300V5.400c0-.9-.9-1.600-3-1.600z" fill="#3572b0"/><path d="M7.400 13.800c2 0 2.300-.8 2.300-1.600V11H7.100v-.5h3.300c1.100 0 1.600-1 1.600-2.200s-.5-2-1.500-2h-.9v1.300c0 1-.8 1.700-1.700 1.700H5.700c-.8 0-1.300.6-1.300 1.300v1.600c0 .9.900 1.600 3 1.600z" fill="#f9c526"/></g></svg>
<div class="row" style="left:126.500px;top:306px;letter-spacing:0.14px">dirstate.py</div>
<svg class="ic" style="left:102.5px;top:325px" width="14" height="16" viewBox="0 0 14 16" ><defs><linearGradient id="gpypy102_325" x1="0" y1="0" x2="1" y2="0"><stop offset="0" stop-color="#d9e3ee"/><stop offset="1" stop-color="#f8fafc"/></linearGradient></defs><path d="M0.500 0.500h8.500l4 4v11H0.500z" fill="url(#gpypy102_325)" stroke="#5f6e7e"/><path d="M9 0.500v4h4" fill="#f4f7fa" stroke="#5f6e7e" stroke-width=".9"/><g transform="translate(1.500,2) scale(.78)"><path d="M6.600 3.800c-2 0-2.300.8-2.300 1.600v1.200h2.600v.5H3.600c-1.100 0-1.600 1-1.600 2.200s.5 2 1.500 2h.9v-1.300c0-1 .8-1.700 1.700-1.700h2.200c.8 0 1.300-.6 1.300-1.300V5.400c0-.9-.9-1.600-3-1.600z" fill="#3572b0"/><path d="M7.400 13.800c2 0 2.300-.8 2.300-1.600V11H7.100v-.5h3.300c1.100 0 1.600-1 1.600-2.200s-.5-2-1.500-2h-.9v1.300c0 1-.8 1.700-1.700 1.700H5.700c-.8 0-1.300.6-1.300 1.300v1.600c0 .9.900 1.600 3 1.600z" fill="#f9c526"/></g></svg>
<div class="row" style="left:126.500px;top:324px;letter-spacing:0.07px">dispatch.py</div>
<svg class="ic" style="left:102.5px;top:343px" width="14" height="16" viewBox="0 0 14 16" ><defs><linearGradient id="gpypy102_343" x1="0" y1="0" x2="1" y2="0"><stop offset="0" stop-color="#d9e3ee"/><stop offset="1" stop-color="#f8fafc"/></linearGradient></defs><path d="M0.500 0.500h8.500l4 4v11H0.500z" fill="url(#gpypy102_343)" stroke="#5f6e7e"/><path d="M9 0.500v4h4" fill="#f4f7fa" stroke="#5f6e7e" stroke-width=".9"/><g transform="translate(1.500,2) scale(.78)"><path d="M6.600 3.800c-2 0-2.300.8-2.300 1.600v1.200h2.600v.5H3.600c-1.100 0-1.600 1-1.600 2.200s.5 2 1.500 2h.9v-1.300c0-1 .8-1.700 1.700-1.700h2.200c.8 0 1.300-.6 1.300-1.300V5.400c0-.9-.9-1.600-3-1.600z" fill="#3572b0"/><path d="M7.400 13.800c2 0 2.300-.8 2.300-1.600V11H7.100v-.5h3.300c1.100 0 1.600-1 1.600-2.200s-.5-2-1.500-2h-.9v1.300c0 1-.8 1.700-1.700 1.700H5.700c-.8 0-1.300.6-1.300 1.300v1.600c0 .9.900 1.600 3 1.600z" fill="#f9c526"/></g></svg>
<div class="row" style="left:126.500px;top:342px;letter-spacing:-0.05px">extensions.py</div>
<svg class="ic" style="left:102.5px;top:361px" width="14" height="16" viewBox="0 0 14 16" ><defs><linearGradient id="gpypy102_361" x1="0" y1="0" x2="1" y2="0"><stop offset="0" stop-color="#d9e3ee"/><stop offset="1" stop-color="#f8fafc"/></linearGradient></defs><path d="M0.500 0.500h8.500l4 4v11H0.500z" fill="url(#gpypy102_361)" stroke="#5f6e7e"/><path d="M9 0.500v4h4" fill="#f4f7fa" stroke="#5f6e7e" stroke-width=".9"/><g transform="translate(1.500,2) scale(.78)"><path d="M6.600 3.800c-2 0-2.300.8-2.300 1.600v1.200h2.600v.5H3.600c-1.100 0-1.600 1-1.600 2.200s.5 2 1.500 2h.9v-1.300c0-1 .8-1.700 1.700-1.700h2.200c.8 0 1.300-.6 1.300-1.300V5.400c0-.9-.9-1.600-3-1.600z" fill="#3572b0"/><path d="M7.400 13.800c2 0 2.300-.8 2.300-1.600V11H7.100v-.5h3.300c1.100 0 1.600-1 1.600-2.200s-.5-2-1.500-2h-.9v1.300c0 1-.8 1.700-1.700 1.700H5.700c-.8 0-1.300.6-1.300 1.300v1.600c0 .9.900 1.600 3 1.600z" fill="#f9c526"/></g></svg>
<div class="row" style="left:126.500px;top:360px;letter-spacing:-0.02px">fancyopts.py</div>
<svg class="ic" style="left:102.5px;top:379px" width="14" height="16" viewBox="0 0 14 16" ><defs><linearGradient id="gpypy102_379" x1="0" y1="0" x2="1" y2="0"><stop offset="0" stop-color="#d9e3ee"/><stop offset="1" stop-color="#f8fafc"/></linearGradient></defs><path d="M0.500 0.500h8.500l4 4v11H0.500z" fill="url(#gpypy102_379)" stroke="#5f6e7e"/><path d="M9 0.500v4h4" fill="#f4f7fa" stroke="#5f6e7e" stroke-width=".9"/><g transform="translate(1.500,2) scale(.78)"><path d="M6.600 3.800c-2 0-2.300.8-2.300 1.600v1.200h2.600v.5H3.600c-1.100 0-1.600 1-1.600 2.200s.5 2 1.500 2h.9v-1.300c0-1 .8-1.700 1.700-1.700h2.200c.8 0 1.300-.6 1.300-1.300V5.400c0-.9-.9-1.600-3-1.600z" fill="#3572b0"/><path d="M7.400 13.800c2 0 2.300-.8 2.300-1.600V11H7.100v-.5h3.300c1.100 0 1.600-1 1.600-2.200s-.5-2-1.500-2h-.9v1.300c0 1-.8 1.700-1.700 1.700H5.700c-.8 0-1.300.6-1.300 1.300v1.600c0 .9.900 1.600 3 1.600z" fill="#f9c526"/></g></svg>
<div class="row" style="left:126.500px;top:378px;letter-spacing:0.04px">filelog.py</div>
<svg class="ic" style="left:102.5px;top:397px" width="14" height="16" viewBox="0 0 14 16" ><defs><linearGradient id="gpypy102_397" x1="0" y1="0" x2="1" y2="0"><stop offset="0" stop-color="#d9e3ee"/><stop offset="1" stop-color="#f8fafc"/></linearGradient></defs><path d="M0.500 0.500h8.500l4 4v11H0.500z" fill="url(#gpypy102_397)" stroke="#5f6e7e"/><path d="M9 0.500v4h4" fill="#f4f7fa" stroke="#5f6e7e" stroke-width=".9"/><g transform="translate(1.500,2) scale(.78)"><path d="M6.600 3.800c-2 0-2.300.8-2.300 1.600v1.200h2.600v.5H3.600c-1.100 0-1.600 1-1.600 2.200s.5 2 1.500 2h.9v-1.300c0-1 .8-1.700 1.700-1.700h2.200c.8 0 1.300-.6 1.300-1.300V5.400c0-.9-.9-1.600-3-1.600z" fill="#3572b0"/><path d="M7.400 13.800c2 0 2.300-.8 2.300-1.600V11H7.100v-.5h3.300c1.100 0 1.600-1 1.600-2.200s-.5-2-1.500-2h-.9v1.300c0 1-.8 1.700-1.700 1.700H5.700c-.8 0-1.300.6-1.300 1.300v1.600c0 .9.900 1.600 3 1.600z" fill="#f9c526"/></g></svg>
<div class="row" style="left:126.500px;top:396px;letter-spacing:0.08px">filemerge.py</div>
<svg class="ic" style="left:102.5px;top:415px" width="14" height="16" viewBox="0 0 14 16" ><defs><linearGradient id="gpypy102_415" x1="0" y1="0" x2="1" y2="0"><stop offset="0" stop-color="#d9e3ee"/><stop offset="1" stop-color="#f8fafc"/></linearGradient></defs><path d="M0.500 0.500h8.500l4 4v11H0.500z" fill="url(#gpypy102_415)" stroke="#5f6e7e"/><path d="M9 0.500v4h4" fill="#f4f7fa" stroke="#5f6e7e" stroke-width=".9"/><g transform="translate(1.500,2) scale(.78)"><path d="M6.600 3.800c-2 0-2.300.8-2.300 1.600v1.200h2.600v.5H3.600c-1.100 0-1.600 1-1.600 2.200s.5 2 1.500 2h.9v-1.300c0-1 .8-1.700 1.700-1.700h2.200c.8 0 1.300-.6 1.300-1.300V5.400c0-.9-.9-1.600-3-1.600z" fill="#3572b0"/><path d="M7.400 13.800c2 0 2.300-.8 2.300-1.600V11H7.100v-.5h3.300c1.100 0 1.600-1 1.600-2.200s-.5-2-1.500-2h-.9v1.300c0 1-.8 1.700-1.700 1.700H5.700c-.8 0-1.300.6-1.300 1.300v1.600c0 .9.900 1.600 3 1.600z" fill="#f9c526"/></g></svg>
<div class="row" style="left:126.500px;top:414px;letter-spacing:0.02px">hbisect.py</div>
<svg class="ic" style="left:102.5px;top:433px" width="14" height="16" viewBox="0 0 14 16" ><defs><linearGradient id="gpypy102_433" x1="0" y1="0" x2="1" y2="0"><stop offset="0" stop-color="#d9e3ee"/><stop offset="1" stop-color="#f8fafc"/></linearGradient></defs><path d="M0.500 0.500h8.500l4 4v11H0.500z" fill="url(#gpypy102_433)" stroke="#5f6e7e"/><path d="M9 0.500v4h4" fill="#f4f7fa" stroke="#5f6e7e" stroke-width=".9"/><g transform="translate(1.500,2) scale(.78)"><path d="M6.600 3.800c-2 0-2.300.8-2.300 1.600v1.200h2.600v.5H3.600c-1.100 0-1.600 1-1.600 2.200s.5 2 1.500 2h.9v-1.300c0-1 .8-1.700 1.700-1.700h2.200c.8 0 1.300-.6 1.300-1.300V5.400c0-.9-.9-1.600-3-1.600z" fill="#3572b0"/><path d="M7.400 13.800c2 0 2.300-.8 2.300-1.600V11H7.100v-.5h3.300c1.100 0 1.600-1 1.600-2.200s-.5-2-1.500-2h-.9v1.300c0 1-.8 1.700-1.700 1.700H5.700c-.8 0-1.300.6-1.300 1.300v1.600c0 .9.900 1.600 3 1.600z" fill="#f9c526"/></g></svg>
<div class="row" style="left:126.500px;top:432px;letter-spacing:0.13px">help.py</div>
<svg class="ic" style="left:102.5px;top:451px" width="14" height="16" viewBox="0 0 14 16" ><defs><linearGradient id="gpypy102_451" x1="0" y1="0" x2="1" y2="0"><stop offset="0" stop-color="#d9e3ee"/><stop offset="1" stop-color="#f8fafc"/></linearGradient></defs><path d="M0.500 0.500h8.500l4 4v11H0.500z" fill="url(#gpypy102_451)" stroke="#5f6e7e"/><path d="M9 0.500v4h4" fill="#f4f7fa" stroke="#5f6e7e" stroke-width=".9"/><g transform="translate(1.500,2) scale(.78)"><path d="M6.600 3.800c-2 0-2.300.8-2.300 1.600v1.200h2.600v.5H3.600c-1.100 0-1.600 1-1.600 2.200s.5 2 1.500 2h.9v-1.300c0-1 .8-1.700 1.700-1.700h2.200c.8 0 1.300-.6 1.300-1.300V5.400c0-.9-.9-1.600-3-1.600z" fill="#3572b0"/><path d="M7.400 13.800c2 0 2.300-.8 2.300-1.600V11H7.100v-.5h3.300c1.100 0 1.600-1 1.600-2.200s-.5-2-1.500-2h-.9v1.300c0 1-.8 1.700-1.700 1.700H5.700c-.8 0-1.300.6-1.300 1.300v1.600c0 .9.900 1.600 3 1.600z" fill="#f9c526"/></g></svg>
<div class="row" style="left:126.500px;top:450px;letter-spacing:-0.04px">hg.py</div>
<svg class="ic" style="left:102.5px;top:469px" width="14" height="16" viewBox="0 0 14 16" ><defs><linearGradient id="gpypy102_469" x1="0" y1="0" x2="1" y2="0"><stop offset="0" stop-color="#d9e3ee"/><stop offset="1" stop-color="#f8fafc"/></linearGradient></defs><path d="M0.500 0.500h8.500l4 4v11H0.500z" fill="url(#gpypy102_469)" stroke="#5f6e7e"/><path d="M9 0.500v4h4" fill="#f4f7fa" stroke="#5f6e7e" stroke-width=".9"/><g transform="translate(1.500,2) scale(.78)"><path d="M6.600 3.800c-2 0-2.300.8-2.300 1.600v1.200h2.600v.5H3.600c-1.100 0-1.600 1-1.600 2.200s.5 2 1.500 2h.9v-1.300c0-1 .8-1.700 1.700-1.700h2.200c.8 0 1.300-.6 1.300-1.300V5.400c0-.9-.9-1.600-3-1.600z" fill="#3572b0"/><path d="M7.400 13.800c2 0 2.300-.8 2.300-1.600V11H7.100v-.5h3.300c1.100 0 1.600-1 1.600-2.200s-.5-2-1.500-2h-.9v1.300c0 1-.8 1.700-1.700 1.700H5.700c-.8 0-1.300.6-1.300 1.300v1.600c0 .9.900 1.600 3 1.600z" fill="#f9c526"/></g></svg>
<div class="row" style="left:126.500px;top:468px;letter-spacing:0.01px">hook.py</div>
<svg class="ic" style="left:102.5px;top:487px" width="14" height="16" viewBox="0 0 14 16" ><defs><linearGradient id="gpypy102_487" x1="0" y1="0" x2="1" y2="0"><stop offset="0" stop-color="#d9e3ee"/><stop offset="1" stop-color="#f8fafc"/></linearGradient></defs><path d="M0.500 0.500h8.500l4 4v11H0.500z" fill="url(#gpypy102_487)" stroke="#5f6e7e"/><path d="M9 0.500v4h4" fill="#f4f7fa" stroke="#5f6e7e" stroke-width=".9"/><g transform="translate(1.500,2) scale(.78)"><path d="M6.600 3.800c-2 0-2.300.8-2.300 1.600v1.200h2.600v.5H3.600c-1.100 0-1.600 1-1.600 2.200s.5 2 1.500 2h.9v-1.300c0-1 .8-1.700 1.700-1.700h2.200c.8 0 1.300-.6 1.300-1.300V5.400c0-.9-.9-1.600-3-1.600z" fill="#3572b0"/><path d="M7.400 13.800c2 0 2.300-.8 2.300-1.600V11H7.100v-.5h3.300c1.100 0 1.600-1 1.600-2.200s-.5-2-1.500-2h-.9v1.300c0 1-.8 1.700-1.700 1.700H5.700c-.8 0-1.300.6-1.300 1.300v1.600c0 .9.900 1.600 3 1.600z" fill="#f9c526"/></g></svg>
<div class="row" style="left:126.500px;top:486px;letter-spacing:0.2px">httprangereader.py</div>
<svg class="ic" style="left:102.5px;top:505px" width="14" height="16" viewBox="0 0 14 16" ><defs><linearGradient id="gpypy102_505" x1="0" y1="0" x2="1" y2="0"><stop offset="0" stop-color="#d9e3ee"/><stop offset="1" stop-color="#f8fafc"/></linearGradient></defs><path d="M0.500 0.500h8.500l4 4v11H0.500z" fill="url(#gpypy102_505)" stroke="#5f6e7e"/><path d="M9 0.500v4h4" fill="#f4f7fa" stroke="#5f6e7e" stroke-width=".9"/><g transform="translate(1.500,2) scale(.78)"><path d="M6.600 3.800c-2 0-2.300.8-2.300 1.600v1.200h2.600v.5H3.600c-1.100 0-1.600 1-1.600 2.200s.5 2 1.500 2h.9v-1.300c0-1 .8-1.700 1.700-1.700h2.200c.8 0 1.300-.6 1.300-1.300V5.400c0-.9-.9-1.600-3-1.600z" fill="#3572b0"/><path d="M7.400 13.800c2 0 2.300-.8 2.300-1.600V11H7.100v-.5h3.300c1.100 0 1.600-1 1.600-2.200s-.5-2-1.500-2h-.9v1.300c0 1-.8 1.700-1.700 1.700H5.700c-.8 0-1.300.6-1.300 1.300v1.600c0 .9.900 1.600 3 1.600z" fill="#f9c526"/></g></svg>
<div class="row" style="left:126.500px;top:504px;letter-spacing:0.23px">httprepo.py</div>
<svg class="ic" style="left:102.5px;top:523px" width="14" height="16" viewBox="0 0 14 16" ><defs><linearGradient id="gpypy102_523" x1="0" y1="0" x2="1" y2="0"><stop offset="0" stop-color="#d9e3ee"/><stop offset="1" stop-color="#f8fafc"/></linearGradient></defs><path d="M0.500 0.500h8.500l4 4v11H0.500z" fill="url(#gpypy102_523)" stroke="#5f6e7e"/><path d="M9 0.500v4h4" fill="#f4f7fa" stroke="#5f6e7e" stroke-width=".9"/><g transform="translate(1.500,2) scale(.78)"><path d="M6.600 3.800c-2 0-2.300.8-2.300 1.600v1.200h2.600v.5H3.600c-1.100 0-1.600 1-1.600 2.200s.5 2 1.500 2h.9v-1.300c0-1 .8-1.700 1.700-1.700h2.200c.8 0 1.300-.6 1.300-1.300V5.400c0-.9-.9-1.600-3-1.600z" fill="#3572b0"/><path d="M7.400 13.800c2 0 2.300-.8 2.300-1.600V11H7.100v-.5h3.300c1.100 0 1.600-1 1.600-2.200s-.5-2-1.500-2h-.9v1.300c0 1-.8 1.700-1.700 1.700H5.700c-.8 0-1.300.6-1.300 1.300v1.600c0 .9.900 1.600 3 1.600z" fill="#f9c526"/></g></svg>
<div class="row" style="left:126.500px;top:522px;letter-spacing:0.2px">i18n.py</div>
</div>
<div class="a" style="left:251px;top:79px;width:15px;height:14px;background:linear-gradient(90deg,#dcdcdc 0,#f6f6f6 20%,#fdfdfd 50%,#f6f6f6 80%,#e0e0e0 100%)"></div>
<div class="vsb" style="left:251px;top:84.500px;height:496.500px;border-radius:7.500px"></div>
<div class="vth" style="left:252px;top:130px;width:14px;height:76px"></div>
<div class="sbb" style="left:251px;top:581px;width:15px;height:16px;border-bottom:1px solid #a8a8a8"></div>
<div class="sbb" style="left:251px;top:597px;width:15px;height:17px"></div>
<svg class="ic" style="left:254.500px;top:584.500px" width="8" height="7" viewBox="0 0 8 7"><path d="M4 0.300L7.700 6.500H0.300z" fill="#333"/></svg>
<svg class="ic" style="left:254.500px;top:601.500px" width="8" height="7" viewBox="0 0 8 7"><path d="M4 6.700L7.700 0.500H0.300z" fill="#333"/></svg>
<div class="hsb" style="left:5px;top:614px;width:213px;border-radius:0 7.500px 7.500px 0"></div>
<div class="hth" style="left:12.500px;top:614.500px;width:81px;height:14px"></div>
<div class="sbb" style="left:218px;top:614px;width:16px;height:16px;border-right:1px solid #a8a8a8;background:linear-gradient(#e4e4e4 0,#fbfbfb 45%,#f0f0f0 100%)"></div>
<div class="sbb" style="left:234px;top:614px;width:17px;height:16px;background:linear-gradient(#e4e4e4 0,#fbfbfb 45%,#f0f0f0 100%)"></div>
<svg class="ic" style="left:221.500px;top:618px" width="7" height="8" viewBox="0 0 7 8"><path d="M0.300 4L6.500 0.300v7.400z" fill="#333"/></svg>
<svg class="ic" style="left:238.500px;top:618px" width="7" height="8" viewBox="0 0 7 8"><path d="M6.700 4L0.500 0.300v7.400z" fill="#333"/></svg>
<div id="edp" class="a"></div>
<div id="etab" class="a"></div>
<svg class="ic" style="left:289.5px;top:60.5px" width="14" height="16" viewBox="0 0 14 16" ><defs><linearGradient id="gpypy289_60" x1="0" y1="0" x2="1" y2="0"><stop offset="0" stop-color="#d9e3ee"/><stop offset="1" stop-color="#f8fafc"/></linearGradient></defs><path d="M0.500 0.500h8.500l4 4v11H0.500z" fill="url(#gpypy289_60)" stroke="#5f6e7e"/><path d="M9 0.500v4h4" fill="#f4f7fa" stroke="#5f6e7e" stroke-width=".9"/><g transform="translate(1.500,2) scale(.78)"><path d="M6.600 3.800c-2 0-2.300.8-2.300 1.600v1.200h2.600v.5H3.600c-1.100 0-1.600 1-1.600 2.200s.5 2 1.500 2h.9v-1.300c0-1 .8-1.700 1.700-1.700h2.200c.8 0 1.300-.6 1.300-1.300V5.400c0-.9-.9-1.600-3-1.600z" fill="#3572b0"/><path d="M7.400 13.800c2 0 2.300-.8 2.300-1.600V11H7.100v-.5h3.300c1.100 0 1.600-1 1.600-2.200s-.5-2-1.500-2h-.9v1.300c0 1-.8 1.700-1.700 1.700H5.700c-.8 0-1.300.6-1.300 1.300v1.600c0 .9.900 1.600 3 1.600z" fill="#f9c526"/></g></svg>
<div class="t" style="left:309.500px;top:60.500px;letter-spacing:.56px">changegroup.py</div>
<svg class="ic" style="left:414px;top:66px" width="6" height="6" viewBox="0 0 6 6"><path d="M0.600 0.600l4.800 4.800M5.400 0.600L0.600 5.400" stroke="#222" stroke-width="1.500"/></svg>
<div class="a" style="left:425px;top:68px;width:420px;height:1px;background:#bcbcbc"></div>
<div class="cb" style="left:842px"></div><div class="cb" style="left:857.500px"></div><div class="cb dk" style="left:877px"></div><div class="cb dk" style="left:896px"></div>
<svg class="ic" style="left:846px;top:63.500px" width="6" height="8" viewBox="0 0 6 8"><path d="M5.500 0.300v7.400L0.500 4z" fill="#8a8a8a"/></svg>
<svg class="ic" style="left:863.500px;top:63.500px" width="6" height="8" viewBox="0 0 6 8"><path d="M0.500 0.300v7.400L5.500 4z" fill="#8a8a8a"/></svg>
<svg class="ic" style="left:880.500px;top:65.500px" width="9" height="6" viewBox="0 0 9 6"><path d="M0.300 0.500h8.400L4.500 5.500z" fill="#333"/></svg>
<div class="a" style="left:899.500px;top:63.500px;width:9px;height:8.500px;box-sizing:border-box;border:1.200px solid #3a3a3a;border-top-width:2px;background:#f6f6f6"></div>
<div id="etb" class="a tb"><svg class="dg" style="width:22px;height:31px" viewBox="0 0 22 31" preserveAspectRatio="none"><path d="M22 6.500L12.500 15.800H22z" fill="#eeede2"/></svg><svg class="dg" style="left:0;right:auto;width:14px;height:31px" viewBox="0 0 14 31" preserveAspectRatio="none"><path d="M0 15.600H12L0 22.500z" fill="#f5f6f8"/></svg></div>
<div class="a" style="left:478px;top:84px;width:32px;height:31px;background:#c4dbf7;mix-blend-mode:multiply"></div>
<div class="sep" style="left:284px"></div>
<div class="sep" style="left:376px"></div>
<div class="sep" style="left:515px"></div>
<div class="sep" style="left:622px"></div>
<div class="sep" style="left:697px"></div>
<div class="sep" style="left:772px"></div>
<svg class="ic" style="left:290px;top:91px" width="16" height="16" viewBox="0 0 16 16" ><rect x="0.500" y="1.500" width="13" height="13" fill="#e8eef6" stroke="#5c6f86"/><path d="M2.300 3.500h3M2.300 12.500h3M3.800 3.500v9" stroke="#222" stroke-width=".9"/><path d="M5.300 8.500l4.700-4.300v2.600h2.200V4h3.300v4.500c0 1.500-.800 2.200-2.200 2.200H10v2.500z" fill="#f8bc6a" stroke="#a85e0c" stroke-width=".9" stroke-linejoin="round"/></svg>
<svg class="ic" style="left:311px;top:92px" width="16" height="16" viewBox="0 0 16 16" ><rect x="0.500" y="0.500" width="13" height="13" fill="#a8a8a8" stroke="#9a9a9a"/><path d="M3 3h8M3 5h6" stroke="#bcbcbc"/><path d="M5.500 11.500l5-4v2.200h5v3.600h-5v2.200z" fill="#a2a2a2" stroke="#8e8e8e" stroke-width=".8"/></svg>
<svg class="ic" style="left:332px;top:98px" width="6" height="4" viewBox="0 0 6 4"><path d="M0.300 0.300h5.400L3 3.700z" fill="#9a9a9a"/></svg>
<svg class="ic" style="left:341px;top:92px" width="16" height="16" viewBox="0 0 16 16" ><rect x="2.500" y="0.500" width="13" height="13" fill="#a8a8a8" stroke="#9a9a9a"/><path d="M5 3h8M7 5h6" stroke="#bcbcbc"/><path d="M10.500 11.500l-5-4v2.200h-5v3.600h5v2.200z" fill="#a2a2a2" stroke="#8e8e8e" stroke-width=".8"/></svg>
<svg class="ic" style="left:364px;top:98px" width="6" height="4" viewBox="0 0 6 4"><path d="M0.300 0.300h5.400L3 3.700z" fill="#9a9a9a"/></svg>
<svg class="ic" style="left:390px;top:92px" width="16" height="16" viewBox="0 0 16 16" ><rect x="0.5" y="0.5" width="11" height="6" rx=".8" fill="#f6bd7c" stroke="#a85e0c" stroke-width="1"/><circle cx="8.500" cy="7.500" r="4.300" fill="#dfeaf4" fill-opacity=".9" stroke="#5d6f82" stroke-width="1.300"/><path d="M5.800 6.500a3 3 0 0 1 5.400 0z" fill="#fff" fill-opacity=".8"/><path d="M11.800 10.800l3.500 3.700" stroke="#1a1a1a" stroke-width="2.200" stroke-linecap="round"/></svg>
<svg class="ic" style="left:422px;top:92px" width="16" height="16" viewBox="0 0 16 16" ><rect x="0.5" y="0.5" width="11" height="6" rx=".8" fill="#f6bd7c" stroke="#a85e0c" stroke-width="1"/><path d="M3.500 9.500l6.500-5v3h5.500v4H10v3z" fill="#b8ddfa" stroke="#1c6fc4" stroke-width="1.100" stroke-linejoin="round"/></svg>
<svg class="ic" style="left:454px;top:92px" width="16" height="16" viewBox="0 0 16 16" ><rect x="4.5" y="0.5" width="11" height="6" rx=".8" fill="#f6bd7c" stroke="#a85e0c" stroke-width="1"/><path d="M12.500 9.500l-6.500-5v3H0.500v4H6v3z" fill="#b8ddfa" stroke="#1c6fc4" stroke-width="1.100" stroke-linejoin="round"/></svg>
<svg class="ic" style="left:486px;top:92px" width="16" height="16" viewBox="0 0 16 16" ><rect x="0.5" y="0.5" width="11" height="6" rx=".8" fill="#f6bd7c" stroke="#a85e0c" stroke-width="1"/><rect x="4.500" y="9.500" width="11" height="6" rx=".8" fill="#c9c9c9" stroke="#555" stroke-width="1"/><path d="M0.500 8.500l3 5.500M13 1.500l2.500 6.500" stroke="#444" stroke-width=".9" stroke-dasharray="1.500 1.500"/></svg>
<svg class="ic" style="left:529px;top:92px" width="16" height="16" viewBox="0 0 16 16" ><path d="M6.500 0.500h6.500l3 3.500-3 3.500H6.500z" fill="#8fdcec" stroke="#3a93ad" stroke-width=".9"/><path d="M6 1.500l5.500 6.500h-3v7h-5v-7h-3z" fill="#f6bd7c" stroke="#a85e0c" stroke-width="1" stroke-linejoin="round"/></svg>
<svg class="ic" style="left:561px;top:92px" width="16" height="16" viewBox="0 0 16 16" ><path d="M3.500 0.500h5v7h3l-5.500 6.500-5.500-6.500h3z" fill="#f6bd7c" stroke="#a85e0c" stroke-width="1" stroke-linejoin="round"/><path d="M6.500 12l3-3.500h4l3 3.500-3 3.500h-4z" fill="#8fdcec" stroke="#3a93ad" stroke-width=".9"/></svg>
<svg class="ic" style="left:593px;top:92px" width="16" height="16" viewBox="0 0 16 16" ><path d="M0.500 0.500h6.500l3 3.200-3 3.200H0.500z" fill="#8fdcec" stroke="#3a93ad" stroke-width=".9"/><path d="M6.500 9h6.500l3 3.200-3 3.200H6.500z" fill="#d2d2d2" stroke="#666" stroke-width=".9"/><path d="M1.500 8.500l3.500 6M9.500 5l3 3.500" stroke="#444" stroke-width=".9" stroke-dasharray="1.500 1.500"/></svg>
<svg class="ic" style="left:636px;top:92px" width="16" height="16" viewBox="0 0 16 16" ><path d="M11.500 2.500h4.500M11.500 4.500h4.500M11.500 6.500h4.500M11.500 8.500h4.500M11.500 10.500h4.500M2 12.500h14M2 14.500h14" stroke="#2a2a2a" stroke-width="1.100" stroke-dasharray="3 .4"/><path d="M0.500 5.500l5-4.500v2.500h4.500v4h-4.500v2.500z" fill="#b8ddfa" stroke="#1c5f9c" stroke-width="1.100" stroke-linejoin="round"/></svg>
<svg class="ic" style="left:668px;top:92px" width="16" height="16" viewBox="0 0 16 16" ><path d="M11.500 2.500h4.500M11.500 4.500h4.500M11.500 6.500h4.500M11.500 8.500h4.500M11.500 10.500h4.500M2 12.500h14M2 14.500h14" stroke="#2a2a2a" stroke-width="1.100" stroke-dasharray="3 .4"/><path d="M10.500 5.500l-5-4.500v2.500H0.500v4h5v2.500z" fill="#b8ddfa" stroke="#1c5f9c" stroke-width="1.100" stroke-linejoin="round"/></svg>
<svg class="ic" style="left:711px;top:92px" width="16" height="16" viewBox="0 0 16 16" ><defs><radialGradient id="grecrec711_92" cx=".4" cy=".35" r=".7"><stop offset="0" stop-color="#ff9a9a"/><stop offset="1" stop-color="#f06464"/></radialGradient></defs><circle cx="8" cy="8" r="5.800" fill="url(#grecrec711_92)" stroke="#c84848" stroke-width=".9"/></svg>
<svg class="ic" style="left:743px;top:92px" width="16" height="16" viewBox="0 0 16 16" ><defs><linearGradient id="gstopstop743_92" x1="0" y1="0" x2="0" y2="1"><stop offset="0" stop-color="#d6d6d6"/><stop offset="1" stop-color="#b4b4b4"/></linearGradient></defs><rect x="2.500" y="2.500" width="11" height="11" fill="url(#gstopstop743_92)" stroke="#6c6c6c" stroke-width="1"/></svg>
<svg class="ic" style="left:785.5px;top:92px" width="16" height="16" viewBox="0 0 16 16" ><path d="M11.500 4.500h4.500M11.500 6.500h4.500M11.500 8.500h4.500M2 10.500h14M2 12.500h14M2 14.500h14" stroke="#2a2a2a" stroke-width="1.100" stroke-dasharray="3 .4"/><path d="M2.500 8l2.800-6.500M6.300 8l2.800-6.500M5.200 2l1.200 5.500" stroke="#1e8a0a" stroke-width="2.600" stroke-linecap="round"/><path d="M2.500 8l2.800-6.500M6.300 8l2.800-6.500" stroke="#baf08c" stroke-width=".800" stroke-linecap="round"/></svg>
<svg class="ic" style="left:817.5px;top:92px" width="16" height="16" viewBox="0 0 16 16" ><path d="M11.500 4.500h4.500M11.500 6.500h4.500M11.500 8.500h4.500M2 10.500h14M2 12.500h14M2 14.500h14" stroke="#111" stroke-width="1.200" stroke-dasharray="3 .4"/></svg>
<div id="gut" class="a"></div>
<div class="ln" style="top:116px">1</div>
<div class="ln" style="top:130px">2</div>
<div class="ln" style="top:144px">3</div>
<div class="ln" style="top:158px">4</div>
<div class="ln" style="top:172px">5</div>
<div class="ln" style="top:186px">6</div>
<div class="ln" style="top:200px">7</div>
<div class="ln" style="top:214px">8</div>
<div class="ln" style="top:228px">9</div>
<div class="ln" style="top:242px">10</div>
<div class="ln" style="top:256px">11</div>
<div class="ln" style="top:270px">12</div>
<div class="ln" style="top:284px">13</div>
<div class="ln" style="top:298px">14</div>
<div class="ln" style="top:312px">15</div>
<div class="ln" style="top:326px">16</div>
<div class="ln" style="top:340px">17</div>
<div class="ln" style="top:354px">18</div>
<div class="ln" style="top:368px">19</div>
<div class="ln" style="top:382px">20</div>
<div class="ln" style="top:396px">21</div>
<div class="ln" style="top:410px">22</div>
<div class="ln" style="top:424px">23</div>
<div class="ln" style="top:438px">24</div>
<div class="ln" style="top:452px">25</div>
<div class="ln" style="top:466px">26</div>
<div class="ln" style="top:480px">27</div>
<div class="ln" style="top:494px">28</div>
<div class="ln" style="top:508px">29</div>
<div class="ln" style="top:522px">30</div>
<div class="ln" style="top:536px">31</div>
<div class="ln" style="top:550px">32</div>
<div class="ln" style="top:564px">33</div>
<div class="ln" style="top:578px">34</div>
<div class="ln" style="top:592px">35</div>
<div class="a" style="left:274px;top:606px;width:38px;height:3px;overflow:hidden"><div class="ln" style="left:0;top:0">36</div></div>
<div id="code" class="a">
<div class="a" style="left:9px;top:267px;width:563px;height:14px;background:#e8eef8"></div>
<div class="cl" style="top:1px"><span class="s">"""</span></div>
<div class="cl" style="top:15px"><span class="s">changegroup.py - Mercurial changegroup manipulation functions</span></div>
<div class="cl" style="top:43px"><span class="s"> Copyright 2006 Matt Mackall &lt;mpm@selenic.com&gt;</span></div>
<div class="cl" style="top:71px"><span class="s">This software may be used and distributed according to the terms</span></div>
<div class="cl" style="top:85px"><span class="s">of the GNU General Public License, incorporated herein by reference.</span></div>
<div class="cl" style="top:99px"><span class="s">"""</span></div>
<div class="cl" style="top:127px"><span class="k">from</span> i18n <span class="k">import</span> _</div>
<div class="cl" style="top:141px"><span class="k">import</span> struct, os, bz2, zlib, util, tempfile</div>
<div class="cl" style="top:169px"><span class="k">def</span> getchunk(source):</div>
<div class="cl" style="top:183px">    <span class="s">"""get a chunk from a changegroup"""</span></div>
<div class="cl" style="top:197px">    d = source.read(4)</div>
<div class="cl" style="top:211px">    <span class="k">if</span> not d:</div>
<div class="cl" style="top:225px">        <span class="k">return</span> <span class="s">""</span></div>
<div class="cl" style="top:239px">    l = struct.unpack(<span class="s">"&gt;l"</span>, d)[0]</div>
<div class="cl" style="top:253px">    <span class="k">if</span> l &lt;= 4:</div>
<div class="cl" style="top:267px">        <span class="k">return</span> <span class="s">""</span></div>
<div class="cl" style="top:281px">    d = source.read(l - 4)</div>
<div class="cl" style="top:295px">    <span class="k">if</span> len(d) &lt; l - 4:</div>
<div class="cl" style="top:309px">        <span class="k">raise</span> util.Abort(_(<span class="s">"premature EOF reading chunk"</span></div>
<div class="cl" style="top:323px">                           <span class="s">" (got %d bytes, expected %d)"</span>)</div>
<div class="cl" style="top:337px">                          % (len(d), l - 4))</div>
<div class="cl" style="top:351px">    <span class="k">return</span> d</div>
<div class="cl" style="top:379px"><span class="k">def</span> chunkiter(source):</div>
<div class="cl" style="top:393px">    <span class="s">"""iterate through the chunks in source"""</span></div>
<div class="cl" style="top:407px">    <span class="k">while</span> 1:</div>
<div class="cl" style="top:421px">        c = getchunk(source)</div>
<div class="cl" style="top:435px">        <span class="k">if</span> not c:</div>
<div class="cl" style="top:449px">            <span class="k">break</span></div>
<div class="cl" style="top:463px">        yield c</div>
<div class="cl" style="top:491px"><span class="k">def</span> chunkheader(length):</div>
</div>
<div class="a" style="left:885px;top:115px;width:15px;height:12px;background:linear-gradient(90deg,#dcdcdc 0,#f6f6f6 20%,#fdfdfd 50%,#f6f6f6 80%,#e0e0e0 100%)"></div>
<div class="vsb" style="left:885px;top:118px;height:458px;border-radius:7.500px"></div>
<div class="vth" style="left:885.500px;top:122px;width:14px;height:108px"></div>
<div class="sbb" style="left:885px;top:576px;width:15px;height:17px;border-bottom:1px solid #a8a8a8"></div>
<div class="sbb" style="left:885px;top:593px;width:15px;height:16px"></div>
<svg class="ic" style="left:888.500px;top:580px" width="8" height="7" viewBox="0 0 8 7"><path d="M4 0.300L7.700 6.500H0.300z" fill="#333"/></svg>
<svg class="ic" style="left:888.500px;top:596.800px" width="8" height="7" viewBox="0 0 8 7"><path d="M4 6.700L7.700 0.500H0.300z" fill="#333"/></svg>
<div class="a" style="left:902.500px;top:123.500px;width:8px;height:7.500px;background:#52b45e"></div>
<div class="a" style="left:903px;top:200px;width:8px;height:1px;background:#777"></div><div class="a" style="left:906px;top:199px;width:2px;height:3px;background:#555"></div>
<div class="a" style="left:274px;top:609px;width:640px;height:1px;background:#d2d2d2"></div>
<div class="t" style="left:294.500px;top:611.500px;letter-spacing:.55px">20:18</div>
<div class="t" style="left:356.500px;top:611.500px;letter-spacing:-.5px">INS</div>
<div class="pill" style="left:5px;width:115px"></div>
<svg class="ic" style="left:11px;top:636px" width="16" height="16" viewBox="0 0 16 16" ><circle cx="6.500" cy="6.500" r="5" fill="#e3edf6" stroke="#5d6f82" stroke-width="1.600"/><path d="M3.300 5.500a3.500 3.500 0 0 1 6.400 0z" fill="#fff"/><path d="M10.500 10.500l4.300 4.500" stroke="#1a1a1a" stroke-width="2.400" stroke-linecap="round"/></svg>
<div class="t" style="left:30.500px;top:636.500px;letter-spacing:-.45px">Search Results</div>
<div class="pill" style="left:125px;width:136px"></div>
<svg class="ic" style="left:131.5px;top:636px" width="16" height="16" viewBox="0 0 16 16" ><rect x="0.500" y="0.500" width="14" height="11.500" fill="#f5f7fa" stroke="#5c6f86"/><rect x="1" y="1" width="13" height="2.600" fill="#8aa0ba"/><path d="M8.500 2.300h1M10.500 2.300h1M12.500 2.300h1" stroke="#fff" stroke-width=".9"/><path d="M7 8.300v5.200a2.700 1.200 0 0 0 5.400 0V8.300z" fill="#5a9ce8" stroke="#1c4f9c" stroke-width=".9"/><path d="M8.200 9.500v4.300" stroke="#c4defa" stroke-width="1.200"/><ellipse cx="9.700" cy="8.300" rx="2.700" ry="1.200" fill="#b8d8f8" stroke="#1c4f9c" stroke-width=".9"/></svg>
<div class="t" style="left:150.500px;top:636.500px;letter-spacing:-.05px">Versioning Output</div>
<div class="pill" style="left:265px;width:71px"></div>
<svg class="ic" style="left:271.5px;top:636px" width="16" height="16" viewBox="0 0 16 16" ><rect x="0.500" y="0.500" width="14" height="11.500" fill="#f5f7fa" stroke="#5c6f86"/><rect x="1" y="1" width="13" height="2.600" fill="#8aa0ba"/><path d="M8.500 2.300h1M10.500 2.300h1M12.500 2.300h1" stroke="#fff" stroke-width=".9"/><path d="M6.800 5.800l1.700 2.400c3-1.300 7.300-.300 7.300 2.600s-3.300 3.900-6.200 3.400-3.900-2.700-2.800-8.400z" fill="#f8cc84" stroke="#a8661c" stroke-width=".9" stroke-linejoin="round"/><path d="M9.800 10.800h4.200" stroke="#fff" stroke-width="1.200"/></svg>
<div class="t" style="left:290.500px;top:636.500px">Output</div>
<svg class="ic" style="left:889px;top:660.8px" width="16" height="16" viewBox="0 0 16 16" ><defs><radialGradient id="gglglobe889_660" cx=".35" cy=".3" r=".8"><stop offset="0" stop-color="#e8f4fd"/><stop offset="1" stop-color="#8cc0ec"/></radialGradient><linearGradient id="garglobe889_660" x1="0" y1="0" x2="1" y2="1"><stop offset="0" stop-color="#fdf2d0"/><stop offset="1" stop-color="#e8b84a"/></linearGradient></defs><circle cx="8" cy="7.400" r="6.500" fill="url(#gglglobe889_660)" stroke="#3f6088" stroke-width="1"/><path d="M7 2.500c1.500-1 4-.800 5.500.800 1 1.200 1.500 2.500 1.300 4l-1.300-1-.800 2-1.500-1.500-1 2.700-2-1c-1-1.500-1-3-.200-4.500z" fill="#3faa2c"/><path d="M4 2.800l1.200.400-.800.800z" fill="#5fc040"/><path d="M2.300 7.300H9.300L7.300 9.300C8.500 11.500 11.500 12 13.800 10.800L14.600 12C12 14.500 7.500 14.500 5 11.600L2.300 14.300Z" fill="url(#garglobe889_660)" stroke="#9a5a04" stroke-width="1" stroke-linejoin="round"/></svg>
</body></html>
